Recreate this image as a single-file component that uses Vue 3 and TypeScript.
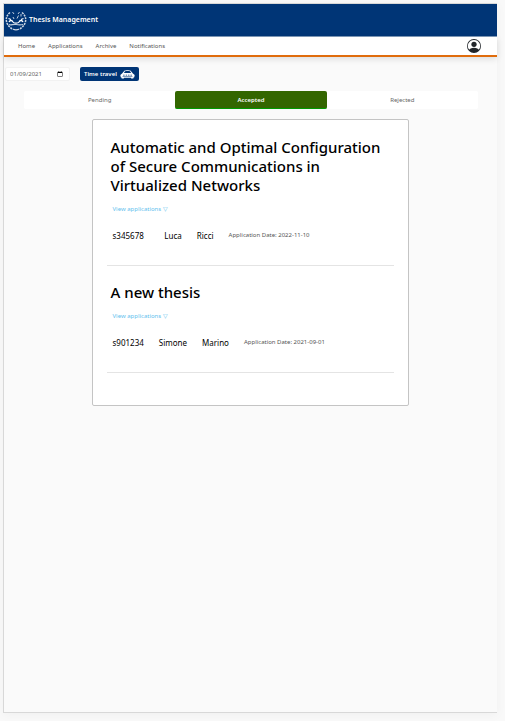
<script setup lang="ts">
import { ref } from 'vue'

interface Application {
  id: string
  name: string
  surname: string
  date: string
}

interface Thesis {
  title: string
  applications: Application[]
}

const links: string[] = ['Home', 'Applications', 'Archive', 'Notifications']
const tabs: string[] = ['Pending', 'Accepted', 'Rejected']
const activeTab = ref('Accepted')
const currentDate = ref('2021-01-09')

const theses: Thesis[] = [
  {
    title: 'Automatic and Optimal Configuration of Secure Communications in Virtualized Networks',
    applications: [{ id: 's345678', name: 'Luca', surname: 'Ricci', date: '2022-11-10' }],
  },
  {
    title: 'A new thesis',
    applications: [{ id: 's901234', name: 'Simone', surname: 'Marino', date: '2021-09-01' }],
  },
]
</script>

<template>
  <div class="page">
    <header class="brand">
      <svg class="crest" viewBox="0 0 22 22" fill="none" stroke="#fff" aria-hidden="true">
        <path d="M5 3.500C2 6 .8 9 1.500 12.500S5 19 8 20.300M17 3.500c3 2.500 4.200 5.500 3.500 9S17 19 14 20.300" stroke-width="1.500" stroke-dasharray="2 .9" opacity=".8" />
        <path d="M8 20.300c2 .7 4 .7 6 0" stroke-width="1.200" opacity=".8" />
        <path d="M3.500 9.500l2.500 1M18.500 9.500l-2.500 1M4 13c1-2 3-2 4 0 1 1.500 5 1.500 6 0 1-2 3-2 4 0" stroke-width="1.300" />
        <path d="M4 15.500c2 1 4-.5 7 0s5 .5 7 0" stroke-width="1.200" opacity=".75" />
        <path d="M7.500 3l1.500 2M14.500 3L13 5M8 8l1 2M13.500 6.500L12 9.500M16 5v2.500" stroke-width="1" opacity=".75" />
      </svg>
      <h1>Thesis Management</h1>
    </header>

    <nav class="nav">
      <a v-for="link in links" :key="link" href="#">{{ link }}</a>
      <button class="profile" type="button" aria-label="Profile">
        <svg viewBox="0 0 16 16" fill="#212529" aria-hidden="true">
          <path d="M11 6a3 3 0 1 1-6 0 3 3 0 0 1 6 0z" />
          <path fill-rule="evenodd" d="M0 8a8 8 0 1 1 16 0A8 8 0 0 1 0 8zm8-7a7 7 0 0 0-5.468 11.370C3.242 11.226 4.805 10 8 10s4.757 1.225 5.468 2.370A7 7 0 0 0 8 1z" />
        </svg>
      </button>
    </nav>

    <main>
      <div class="clock">
        <input v-model="currentDate" type="date" aria-label="Current date" />
        <button class="travel" type="button">
          Time travel
          <svg viewBox="0 0 16 10" aria-hidden="true">
            <path fill="#fff" d="M4.500.8C6 0 10 0 11.500.8L14 4l2 1.500-.5 2.500-1 .5v1h-2.500v-1H4v1H1.500v-1l-1-.5L0 5.500 2 4z" />
            <path fill="#003576" d="M5.200 1.500c1.500-.4 4-.4 5.600 0l1.200 1.700H4zM3.200 5.300h1.600v.9H3.200zM6 5.300h1.600v.9H6zM8.600 5.300h1.600v.9H8.600zM11.300 5.300h1.600v.9h-1.600zM2.500 7.200h11v.5h-11z" />
          </svg>
        </button>
      </div>

      <div class="tabs" role="tablist">
        <button
          v-for="tab in tabs"
          :key="tab"
          type="button"
          role="tab"
          :aria-selected="tab === activeTab"
          :class="{ active: tab === activeTab }"
          @click="activeTab = tab"
        >
          {{ tab }}
        </button>
      </div>

      <section class="card">
        <article v-for="thesis in theses" :key="thesis.title" class="thesis">
          <h2>{{ thesis.title }}</h2>
          <button class="toggle" type="button">View applications ▽</button>
          <div v-for="item in thesis.applications" :key="item.id" class="application">
            <span>{{ item.id }}</span>
            <span class="name">{{ item.name }}</span>
            <span>{{ item.surname }}</span>
            <small>Application Date: {{ item.date }}</small>
          </div>
        </article>
      </section>
    </main>
  </div>
</template>

<style>
body {
  background: #f9f9f9;
}
</style>

<style scoped>
* {
  box-sizing: border-box;
}

.page {
  min-height: calc(100vh - 11px);
  margin: 3px 8px 8px 3px;
  border: 1px solid #d8d8d8;
  border-right: 0;
  background: #fafafa;
  box-shadow: 0 2px 10px rgba(0, 0, 0, 0.04);
  font-family: 'Noto Sans', 'Open Sans', sans-serif;
  font-size: 6px;
  color: #212529;
}

button,
input {
  font: inherit;
}

button {
  padding: 0;
  border: 0;
  background: none;
  cursor: pointer;
}

.brand {
  display: flex;
  align-items: center;
  gap: 2px;
  height: 33px;
  padding-left: 1px;
  border-bottom: 1px solid #7f9aba;
  background: #003576;
  color: #fff;
}

.crest {
  width: 22px;
  height: 22px;
}

h1 {
  margin: 0 0 2px;
  font-size: 7px;
  font-weight: 600;
}

.nav {
  display: flex;
  align-items: center;
  gap: 13px;
  height: 20px;
  padding: 0 16px 0 14px;
  border-bottom: 2px solid #e06c0c;
  background: #fff;
  box-shadow: 0 2px 6px rgba(0, 0, 0, 0.12);
}

.nav a {
  color: #555;
  text-decoration: none;
}

.profile {
  display: flex;
  margin-left: auto;
}

.profile svg {
  width: 14px;
  height: 14px;
}

.clock {
  display: flex;
  align-items: center;
  gap: 10px;
  margin-top: 10px;
  padding-left: 1px;
}

.clock input {
  width: 65px;
  height: 14px;
  padding: 0 4px;
  border: 1px solid #f2f2f2;
  border-radius: 2px;
  background: #fff;
  color: #666;
}

.clock input::-webkit-datetime-edit-month-field,
.clock input::-webkit-datetime-edit-day-field,
.clock input::-webkit-datetime-edit-year-field {
  padding: 0;
}

.travel {
  display: flex;
  align-items: center;
  gap: 3px;
  height: 14px;
  padding: 0 4px;
  border-radius: 2px;
  background: #003576;
  color: #fff;
  font-weight: 600;
}

.travel svg {
  width: 15px;
  height: 9px;
}

.tabs {
  display: flex;
  margin: 10px 19px 0 20px;
  border-radius: 2px;
  background: #fff;
}

.tabs button {
  flex: 1;
  height: 18px;
  border-radius: 2px;
  color: #666;
}

.tabs .active {
  border-bottom: 1px solid #009a00;
  background: #336600;
  color: #fff;
  font-weight: 600;
}

.card {
  width: 64.5%;
  margin: 10px auto 0;
  padding: 18px 14px 32px;
  border: 1px solid #c4c4c4;
  border-radius: 2px;
  background: #fff;
}

.thesis {
  padding: 0 4px 24px;
  border-bottom: 1px solid #e4e4e4;
}

.thesis + .thesis {
  padding-top: 17px;
}

h2 {
  margin: 0 0 10px;
  color: #000;
  font-size: 15px;
  font-weight: 500;
  line-height: 19px;
}

.toggle {
  display: block;
  padding: 0 2px;
  color: #63bfee;
  line-height: 8px;
}

.application {
  display: flex;
  gap: 15px;
  margin-top: 18px;
  padding-left: 2px;
  color: #000;
  font-size: 8px;
  line-height: 10px;
}

.application .name {
  min-width: 23px;
  text-align: right;
}

.application small {
  color: #555;
  font-size: 6px;
  line-height: 8px;
}
</style>
